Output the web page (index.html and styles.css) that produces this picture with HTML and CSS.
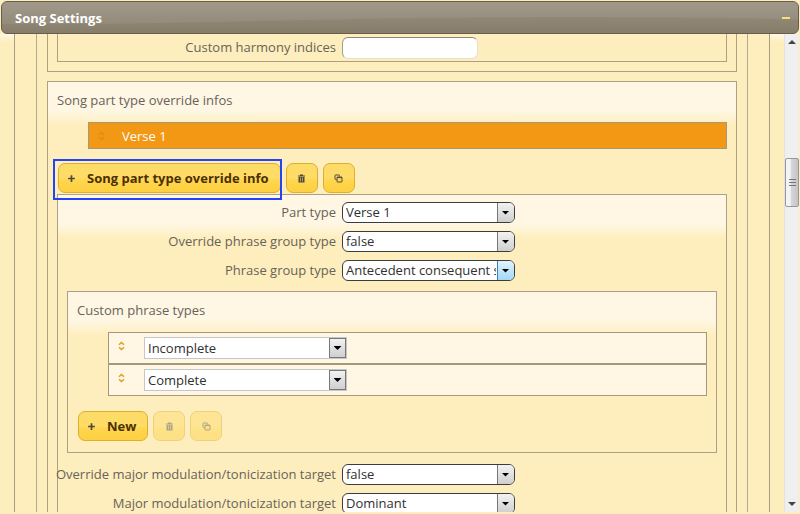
FILE: index.html
```html
<!DOCTYPE html>
<html lang="en">
<head>
  <meta charset="UTF-8" />
  <meta name="viewport" content="width=device-width, initial-scale=1" />
  <title>Song Settings</title>
  <link rel="stylesheet" href="styles.css">
</head>
<body>
  <svg class="icon-defs" aria-hidden="true">
    <symbol id="icon-plus" viewBox="0 0 8 8">
      <path d="M4 1v6M1 4h6" fill="none" stroke="currentColor" stroke-width="1.5" />
    </symbol>
    <symbol id="icon-trash" viewBox="0 0 9 9">
      <path d="M1 1.500h7v1H1zM3 0.500h3v1H3zM1.500 3h6v5.500h-6z" fill="currentColor" />
      <path d="M3.500 3.500v4M5.500 3.500v4" fill="none" stroke="#fedb62" stroke-width="0.600" />
    </symbol>
    <symbol id="icon-copy" viewBox="0 0 9 9">
      <path d="M2.500 5.500H1.600Q1 5.500 1 4.900V1.600Q1 1 1.600 1H4.900Q5.500 1 5.500 1.600V2.300" fill="none" stroke="currentColor" stroke-width="1" />
      <rect x="3" y="3" width="5" height="5" rx="0.600" fill="none" stroke="currentColor" stroke-width="1" />
      <path d="M3 3.600h5" stroke="currentColor" stroke-width="1" />
    </symbol>
    <symbol id="icon-sort" viewBox="0 0 8 10">
      <path d="M1.500 3.800L4 1.500L6.500 3.800M1.500 6.200L4 8.500L6.500 6.200" fill="none" stroke="currentColor" stroke-width="1.500" />
    </symbol>
  </svg>

  <header class="title-bar">
    <svg class="title-gloss" viewBox="0 0 800 32" preserveAspectRatio="none" aria-hidden="true">
      <path d="M0 0H800V18Q560 12 240 20Q110 23 0 23Z" fill="#ffffff" fill-opacity="0.07" />
    </svg>
    <h1>Song Settings</h1>
    <button class="collapse-button" type="button" aria-label="Collapse"></button>
  </header>

  <main class="viewport">
    <div class="content">
      <div class="panel-outer">
        <div class="panel-inner">
          <section class="box box-tail">
            <div class="box box-tail-inner">
              <div class="field">
                <label for="harmony">Custom harmony indices</label>
                <input class="text-input" type="text" id="harmony">
              </div>
            </div>
          </section>

          <section class="box group override-infos">
            <h2>Song part type override infos</h2>
            <ul class="items">
              <li class="item selected">
                <svg class="sort-icon"><use href="#icon-sort" /></svg>
                <span>Verse 1</span>
              </li>
            </ul>
            <div class="actions">
              <button class="button add-button highlighted" type="button"><svg class="icon"><use href="#icon-plus" /></svg>Song part type override info</button>
              <button class="button icon-button" type="button" aria-label="Delete"><svg class="icon"><use href="#icon-trash" /></svg></button>
              <button class="button icon-button" type="button" aria-label="Copy"><svg class="icon"><use href="#icon-copy" /></svg></button>
            </div>

            <div class="box details">
              <div class="field">
                <label for="part-type">Part type</label>
                <span class="select rounded"><select id="part-type"><option>Verse 1</option></select></span>
              </div>
              <div class="field">
                <label for="override-group">Override phrase group type</label>
                <span class="select rounded"><select id="override-group"><option>false</option><option>true</option></select></span>
              </div>
              <div class="field">
                <label for="group-type">Phrase group type</label>
                <span class="select rounded active"><select id="group-type"><option>Antecedent consequent sentence</option></select></span>
              </div>

              <section class="box group phrase-types">
                <h2>Custom phrase types</h2>
                <ul class="items">
                  <li class="item">
                    <svg class="sort-icon"><use href="#icon-sort" /></svg>
                    <span class="select"><select aria-label="Phrase type 1"><option>Incomplete</option><option>Complete</option></select></span>
                  </li>
                  <li class="item">
                    <svg class="sort-icon"><use href="#icon-sort" /></svg>
                    <span class="select"><select aria-label="Phrase type 2"><option>Complete</option><option>Incomplete</option></select></span>
                  </li>
                </ul>
                <div class="actions">
                  <button class="button add-button" type="button"><svg class="icon"><use href="#icon-plus" /></svg>New</button>
                  <button class="button icon-button" type="button" aria-label="Delete" disabled><svg class="icon"><use href="#icon-trash" /></svg></button>
                  <button class="button icon-button" type="button" aria-label="Copy" disabled><svg class="icon"><use href="#icon-copy" /></svg></button>
                </div>
              </section>

              <div class="field">
                <label for="override-major">Override major modulation/tonicization target</label>
                <span class="select rounded"><select id="override-major"><option>false</option><option>true</option></select></span>
              </div>
              <div class="field">
                <label for="major-target">Major modulation/tonicization target</label>
                <span class="select rounded"><select id="major-target"><option>Dominant</option></select></span>
              </div>
            </div>
          </section>
        </div>
      </div>
    </div>

    <div class="scrollbar" aria-hidden="true">
      <span class="arrow arrow-up"></span>
      <span class="track-above"></span>
      <span class="thumb"></span>
      <span class="track-below"></span>
      <span class="arrow arrow-down"></span>
    </div>
  </main>
</body>
</html>
```
FILE: styles.css
```css
* { margin: 0; padding: 0; box-sizing: border-box; }
body {
  font-family: 'Open Sans', 'Noto Sans', sans-serif;
  font-size: 13px;
  line-height: 20px;
  color: #67635a;
  background: #feeebd;
  height: 100vh;
  overflow: hidden;
  display: flex;
  flex-direction: column;
}
button, select, input { font: inherit; }
.icon-defs { position: absolute; width: 0; height: 0; }

/* Title bar */
.title-bar {
  position: relative;
  flex: none;
  height: 33px;
  margin: 1px 1px 0;
  padding: 0 8px 0 13px;
  display: flex;
  align-items: center;
  justify-content: space-between;
  border: 1px solid #655e4e;
  border-radius: 6px;
  background: linear-gradient(#9a9181, #867d6a);
  color: #fff;
}
.title-gloss {
  position: absolute;
  top: 0; left: 0;
  width: 100%; height: 100%;
}
h1 { font-size: 13px; font-weight: 700; position: relative; }
.collapse-button {
  position: relative;
  width: 8px;
  height: 2px;
  border: none;
  background: #fadc7a;
}

/* Scrolled content */
.viewport {
  flex: 1;
  min-height: 0;
  margin: 0 1px 2px 0;
  display: flex;
}
.content {
  flex: 1;
  overflow: hidden;
  background: linear-gradient(#fff7e4, #feeebd 8px);
}
.panel-outer {
  margin: 0 14px;
  padding: 0 21px;
  border: 1px solid #a99d80;
  border-width: 0 1px;
  background: #feeebd;
}
.panel-inner {
  padding: 0 10px;
  border: 1px solid #b5aa8a;
  border-width: 0 1px;
}
.box { border: 1px solid #aca182; }
.box-tail { border-top: none; padding: 0 9px 9px; margin-bottom: 9px; }
.box-tail-inner { border-top: none; padding: 3px 0 2px; }

.group {
  padding: 0 9px;
  background: linear-gradient(#fff7e4 28px, #feeebd 44px);
}
h2 {
  font-size: 13px;
  font-weight: 400;
  padding: 8px 0 12px;
}
.items { list-style: none; padding-left: 31px; }
.item {
  display: flex;
  align-items: center;
  height: 32px;
  padding-left: 8px;
  gap: 18px;
  border: 1px solid #a4997b;
  background: #fff7e4;
}
.item.selected {
  height: 27px;
  gap: 16px;
  background: #f39814;
  color: #fff;
}
.sort-icon { width: 9px; height: 10px; color: #d8a01c; }
.item .sort-icon { margin-bottom: 4px; }
.item.selected .sort-icon { margin-bottom: 0; color: #d8900a; }

/* Buttons */
.actions {
  display: flex;
  gap: 5px;
  padding: 14px 1px 1px;
}
.button {
  height: 30px;
  display: flex;
  align-items: center;
  border: 1px solid #dfae2c;
  border-radius: 7px;
  background: linear-gradient(#fddb68 0%, #fedc66 50%, #fed54c 60%, #fed042 100%);
  color: #4c3000;
  cursor: pointer;
}
.add-button {
  position: relative;
  padding: 0 11px 0 8px;
  gap: 11px;
  font-weight: 700;
}
.icon-button { width: 32px; justify-content: center; }
.icon { width: 9px; height: 9px; color: #4a4a3c; }
.button:disabled { opacity: 0.45; cursor: default; }
.highlighted::after {
  content: '';
  position: absolute;
  top: -5px; right: -2px; bottom: -8px; left: -6px;
  border: 2px solid #2344f6;
}

/* Form rows */
.details {
  padding: 7px 0;
  display: flex;
  flex-direction: column;
  gap: 8px;
  background: linear-gradient(#fff7e4 28px, #feeebd 44px);
}
.field {
  display: grid;
  grid-template-columns: 278px 1fr;
  column-gap: 6px;
  align-items: start;
}
.field label {
  display: flex;
  justify-content: flex-end;
  white-space: nowrap;
}
.text-input {
  width: 136px;
  height: 22px;
  padding: 0 4px;
  border: 1px solid #e4dfcf;
  border-top-color: #8c8778;
  border-left-color: #a39e8e;
  border-radius: 6px;
  background: #fff;
}
.select {
  display: grid;
  grid-template-columns: 1fr 17px;
  width: 203px;
  height: 22px;
  border: 1px solid #c6c6c6;
  background: #fff;
  overflow: hidden;
}
.select.rounded {
  width: 173px;
  height: 21px;
  border-color: #3c3c3c;
  border-radius: 6px;
}
.select select {
  grid-area: 1 / 1;
  min-width: 0;
  appearance: none;
  border: none;
  outline: none;
  padding: 0 1px 0 3px;
  background: none;
  color: #303030;
  line-height: 19px;
}
.select::before {
  content: '';
  grid-area: 1 / 2;
  border: 1px solid #777;
  background: linear-gradient(#f2f2f2, #cfcfcf);
}
.select.rounded::before { border-width: 0 0 0 1px; }
.select.active::before {
  border-color: #3c7fb1;
  background: linear-gradient(#e2f3fd, #a2d8f6);
}
.select::after {
  content: '';
  grid-area: 1 / 2;
  place-self: center;
  width: 8px;
  height: 4px;
  background: #000;
  clip-path: polygon(0 0, 100% 0, 50% 100%);
}
.phrase-types { margin: 2px 9px 3px; }
.phrase-types .items { padding-bottom: 1px; }
.phrase-types .actions { padding-bottom: 11px; }

/* Scrollbar */
.scrollbar {
  width: 15px;
  display: flex;
  flex-direction: column;
  align-items: center;
  background: #efefef;
  border-left: 1px solid #e2e2e2;
}
.arrow {
  width: 8px;
  height: 4px;
  margin: 6px 0;
  background: #444;
}
.arrow-up { clip-path: polygon(50% 0, 100% 100%, 0 100%); }
.arrow-down { clip-path: polygon(0 0, 100% 0, 50% 100%); }
.track-above { flex: 108; }
.track-below { flex: 290; }
.thumb {
  width: 100%;
  height: 49px;
  border: 1px solid #989898;
  border-radius: 2px;
  background:
    repeating-linear-gradient(#777 0 1px, transparent 1px 3px) center / 7px 7px no-repeat,
    linear-gradient(90deg, #f4f4f4 35%, #d6d6d8 45%, #c4c4c8);
}
```
